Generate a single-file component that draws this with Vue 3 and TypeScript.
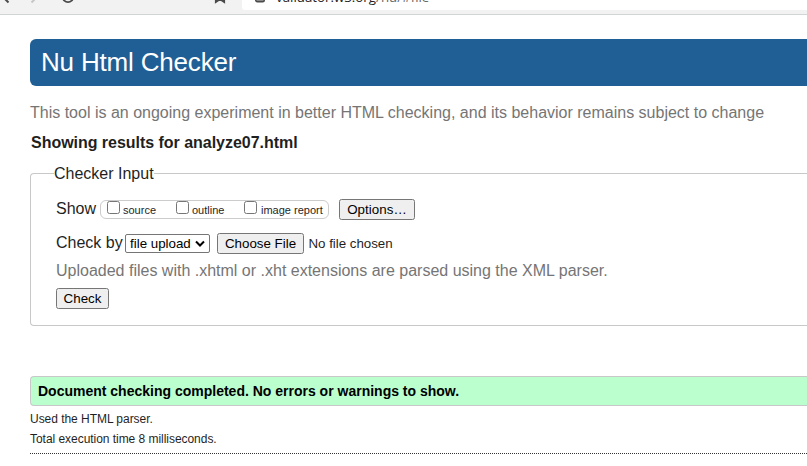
<script setup lang="ts">
import { ref } from 'vue'

interface ShowOption {
  label: string
  checked: boolean
}

const showOptions = ref<ShowOption[]>([
  { label: 'source', checked: false },
  { label: 'outline', checked: false },
  { label: 'image report', checked: false },
])
const method = ref('file upload')
const details: string[] = ['Used the HTML parser.', 'Total execution time 8 milliseconds.']
</script>

<template>
  <div class="page">
    <div class="toolbar">
      <svg class="nav-icons" width="242" height="14" viewBox="0 0 242 14" fill="none">
        <path d="M3 -3 L8.5 2.5" stroke="#4a4a4a" stroke-width="2" />
        <path d="M37 -3 L31.5 2.5" stroke="#c4c4c4" stroke-width="1.8" />
        <circle cx="68" cy="-3" r="5.2" stroke="#4a4a4a" stroke-width="1.8" />
        <path d="M215.8 -3 V2 L220 -0.7 L224.2 2 V-3" stroke="#4a4a4a" stroke-width="1.8" />
      </svg>
      <div class="address">
        <svg class="lock" width="10" height="10" viewBox="0 0 10 10">
          <rect x="0.7" y="-5" width="8.6" height="6.7" rx="1.5" fill="#8b8b8b" stroke="#4a4a4a" stroke-width="1.4" />
        </svg>
        <span class="url"><span class="host">validator.w3.org</span>/nu/#file</span>
      </div>
    </div>

    <main class="content">
      <header class="banner"><h1>Nu Html Checker</h1></header>
      <p class="tagline">This tool is an ongoing experiment in better HTML checking, and its behavior remains subject to change</p>
      <h2>Showing results for analyze07.html</h2>

      <fieldset class="panel">
        <legend>Checker Input</legend>
        <div class="row show-row">
          <span class="row-label show-label">Show</span>
          <div class="checks">
            <label v-for="option in showOptions" :key="option.label" class="check">
              <input v-model="option.checked" type="checkbox" />
              <span>{{ option.label }}</span>
            </label>
          </div>
          <button class="btn options" type="button">Options…</button>
        </div>
        <div class="row method-row">
          <span class="row-label by-label">Check by</span>
          <div class="select" tabindex="0">
            <span>{{ method }}</span>
            <svg width="10" height="8" viewBox="0 0 10 8" fill="none">
              <path d="M1 1.5 L5 5.5 L9 1.5" stroke="#000" stroke-width="2" />
            </svg>
          </div>
          <button class="btn choose" type="button">Choose File</button>
          <span class="file-name">No file chosen</span>
        </div>
        <p class="hint">Uploaded files with .xhtml or .xht extensions are parsed using the XML parser.</p>
        <button class="btn submit" type="button">Check</button>
      </fieldset>

      <p class="success">Document checking completed. No errors or warnings to show.</p>
      <p v-for="line in details" :key="line" class="detail">{{ line }}</p>
      <div class="rule"></div>
    </main>
  </div>
</template>

<style>
body {
  background: #fff;
  overflow: hidden;
}
</style>

<style scoped>
* {
  box-sizing: border-box;
}
.page {
  width: 807px;
  height: 466px;
  overflow: hidden;
  background: #fff;
  color: #1f1f1f;
  font-family: "Liberation Sans", Arial, sans-serif;
  font-size: 16px;
  line-height: 18px;
}
.toolbar {
  display: flex;
  align-items: flex-start;
  height: 15px;
  background: #f2f2f2;
  border-bottom: 1px solid #d0d6d6;
}
.nav-icons {
  flex: none;
}
.address {
  display: flex;
  flex: 1;
  height: 10px;
  padding-left: 13px;
  overflow: hidden;
  background: #fff;
  border-bottom-left-radius: 3px;
}
.lock {
  flex: none;
}
.url {
  margin: -12px 0 0 11px;
  font-family: "Open Sans", "Noto Sans", sans-serif;
  font-size: 13.3px;
  line-height: 18px;
  color: #666;
  white-space: nowrap;
}
.host {
  color: #222;
}
.content {
  padding: 24px 0 0 30px;
}
.banner {
  display: flex;
  align-items: center;
  height: 47px;
  padding: 0 0 2px 11px;
  background: #1f5f95;
  border-radius: 6px 0 0 6px;
}
h1 {
  margin: 0;
  font-size: 26px;
  font-weight: 400;
  line-height: 30px;
  letter-spacing: -0.18px;
  color: #fff;
}
.tagline {
  margin: 18px 0 0;
  color: #757575;
  white-space: nowrap;
}
h2 {
  margin: 12px 0 0 1px;
  font-size: 16px;
  line-height: 18px;
  letter-spacing: -0.03px;
}
.panel {
  height: 162px;
  margin: 12px 0 0;
  padding: 0 0 0 23px;
  border: 1px solid #c8c8c8;
  border-right: 0;
  border-radius: 4px 0 0 4px;
}
legend {
  height: 18px;
  padding: 0;
  line-height: 20px;
}
.row {
  display: flex;
  align-items: center;
  padding-left: 2px;
}
.row-label {
  flex: none;
}
.show-row {
  height: 22px;
  margin-top: 16px;
}
.show-label {
  width: 44px;
  margin-top: -1px;
}
.checks {
  display: flex;
  width: 229px;
  height: 19px;
  padding-left: 6px;
  border: 1px solid #ccc;
  border-radius: 6px;
}
.check {
  display: flex;
  height: 17px;
  font-size: 11px;
  line-height: 13px;
}
.check:nth-child(1) {
  width: 69px;
}
.check:nth-child(2) {
  width: 68px;
}
.check span {
  margin: 3px 0 0 3px;
  white-space: nowrap;
}
.check:nth-child(3) span {
  margin-left: 4px;
}
input {
  appearance: none;
  flex: none;
  width: 13px;
  height: 13px;
  margin: 0;
  background: #fff;
  border: 1px solid #767676;
  border-radius: 2.5px;
}
.btn {
  height: 21px;
  padding: 0;
  background: #efefef;
  border: 1px solid #767676;
  border-radius: 2.5px;
  color: #000;
  font-family: inherit;
  font-size: 13.333px;
  line-height: 15px;
  white-space: nowrap;
}
.options {
  width: 76px;
  margin-left: 10px;
  letter-spacing: 0.05px;
}
.method-row {
  height: 21px;
  margin-top: 13px;
}
.by-label {
  width: 69px;
  margin-top: -2px;
}
.select {
  display: flex;
  align-items: center;
  justify-content: space-between;
  width: 85px;
  height: 19px;
  padding: 0 4px;
  border: 1px solid #767676;
  border-radius: 2px;
  color: #000;
  font-size: 13.333px;
  line-height: 15px;
}
.choose {
  width: 87px;
  margin-left: 7px;
}
.file-name {
  margin-left: 4.5px;
  font-size: 13.333px;
  letter-spacing: -0.03px;
}
.hint {
  margin: 8px 0 0 2px;
  color: #757575;
}
.submit {
  display: block;
  width: 53px;
  margin: 8px 0 0 2px;
}
.success {
  height: 30px;
  margin: 50px 0 0;
  padding-left: 7px;
  background: #bbffcf;
  border: 1px solid #c8c8c8;
  border-right: 0;
  border-radius: 4px 0 0 4px;
  color: #000;
  font-size: 14px;
  font-weight: 700;
  line-height: 28px;
}
.detail {
  height: 20px;
  margin: 0;
  font-size: 12px;
  line-height: 20px;
  letter-spacing: -0.04px;
}
.success + .detail {
  margin-top: 3px;
}
.rule {
  margin-top: 4px;
  border-top: 1px dotted #333;
}
</style>
